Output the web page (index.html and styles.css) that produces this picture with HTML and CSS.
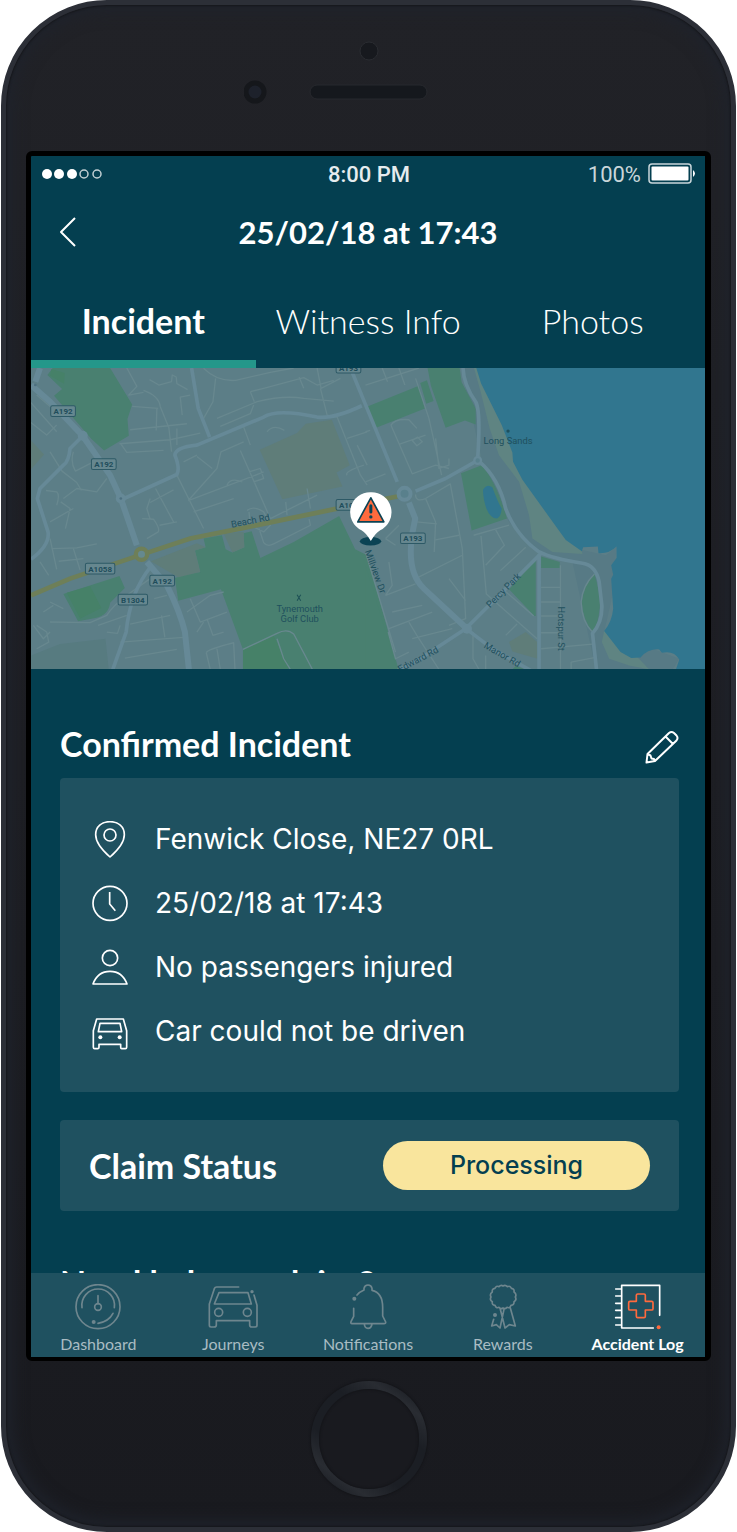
FILE: index.html
```
<!DOCTYPE html>
<html lang="en">
<head>
    <meta charset="UTF-8">
    <meta name="viewport" content="width=device-width, initial-scale=1.0">
    <title>Accident Log</title>
    <link rel="stylesheet" href="styles.css">
</head>
<body>
<div class="phone">
    <div class="phone-top">
        <svg class="sensors" viewBox="0 0 250 70" aria-hidden="true">
            <circle cx="125" cy="12" r="9" fill="#17191e" stroke="#2a2c31"/>
            <circle cx="11" cy="53" r="9" fill="#1d212b" stroke="#15171b" stroke-width="5"/>
            <rect x="66" y="46" width="117" height="14" rx="7" fill="#15181d" stroke="#27292e"/>
        </svg>
    </div>

    <div class="screen">
        <div class="status-bar">
            <svg class="signal" viewBox="0 0 62 12" aria-hidden="true">
                <g fill="#fff">
                    <circle cx="6" cy="6" r="5"/>
                    <circle cx="18" cy="6" r="5"/>
                    <circle cx="31" cy="6" r="5"/>
                </g>
                <g fill="none" stroke="#c3d0d4" stroke-width="1.5">
                    <circle cx="43" cy="6" r="4"/>
                    <circle cx="56" cy="6" r="4"/>
                </g>
            </svg>
            <span class="clock">8:00 PM</span>
            <span class="power">
                100%
                <svg class="battery" viewBox="0 0 49 22" aria-hidden="true">
                    <rect x="1" y="1" width="42" height="19" rx="3" fill="none" stroke="#c9d6da" stroke-width="1.5"/>
                    <rect x="3.5" y="3.5" width="37" height="14" rx="1" fill="#fff"/>
                    <path d="M45 7q4 3.500 0 7z" fill="#fff"/>
                </svg>
            </span>
        </div>

        <header class="title-bar">
            <button class="icon-button back" aria-label="Back">
                <svg viewBox="0 0 18 32"><path d="M16 2 2 16l14 14"/></svg>
            </button>
            <h1>25/02/18 at 17:43</h1>
        </header>

        <nav class="tabs">
            <a class="tab active" href="#incident">Incident</a>
            <a class="tab" href="#witness">Witness Info</a>
            <a class="tab" href="#photos">Photos</a>
        </nav>

        <main class="content" id="incident">
            <svg class="map" viewBox="3 9 2019 903" role="img" aria-label="Map of the incident location">
                <rect x="3" y="9" width="2019" height="903" fill="#5c7e87"/>

                <!-- parks and fields, west -->
                <g fill="#498070">
                    <path d="M105 9H240L306 118 292 162 296 212 222 256 184 222 72 92 96 72 52 30 68 9z"/>
                    <path d="M100 686 268 632 284 668 240 712Q236 748 196 758L144 768z"/>
                    <path d="M520 520 575 510 586 552 606 562 642 546 640 504 664 498 690 578 790 530 926 452 974 552 1010 570 1104 912H638V852L572 672 444 706 434 638 472 626 510 620 494 556 526 546z"/>
                </g>
                <g fill="#468168">
                    <path d="M110 682 180 662 214 728 150 760zM64 12l40 12-2 32-42-24zM638 852 730 812 780 912H638z"/>
                </g>
                <g fill="#5f7d79">
                    <path d="M688 254 800 204 826 176 904 164 958 300 918 322 936 364 756 402z"/>
                    <path d="M362 588 500 534 526 546 494 556 510 620 444 636zM3 226 42 268 3 312zM580 504 640 500 642 546 606 562z"/>
                </g>
                <path d="M3 870 90 836 226 820 236 912H3z" fill="#577b80"/>

                <!-- sea, beach and parks, east -->
                <g transform="translate(1005 0)">
                    <path d="M286 9H340L440 260 560 470 640 552 720 570 752 545 740 690 715 798 800 880 860 850 940 880 920 912H690L620 590 520 560 430 470 350 290z" fill="#577a85"/>
                    <path d="M325 9 345 80 372 190 400 270 460 350 490 450 500 520 560 560 650 566 640 520 440 230 345 9zM715 796 708 830 730 880 790 900 850 912 800 860z" fill="#5f8482"/>
                    <path d="M332 9 346 55 408 180 440 262 442 290 470 344 568 480 600 524 648 558 652 546 696 544 698 564Q730 566 752 544V578L736 600 742 628 736 640 742 730Q738 770 715 797L764 860 796 878 824 876Q846 850 880 852L888 862Q924 854 940 882L930 912H1017V9z" fill="#31768f"/>
                    <g fill="#498070">
                        <path d="M186 9H282L288 52 330 130V178L298 166 240 188 196 62zM6 124 160 62 178 130 32 188zM164 54 184 46 204 108 182 116z"/>
                        <path d="M286 324 348 300Q392 350 424 460L318 496zM430 672 510 584V752H506zM526 574 582 590V608H526z"/>
                        <path d="M686 626Q708 700 700 740 696 780 680 800 650 760 648 710 654 660 686 626zM0 600 94 912H0zM440 912 450 902 480 912z"/>
                    </g>
                    <path d="M430 830 480 800 514 830 516 880 440 858z" fill="#5f7d79"/>
                    <path d="M352 374Q364 354 380 366 396 410 408 430 406 456 394 460 374 460 362 430 352 400 352 374z" fill="#31768f"/>
                </g>

                <!-- side streets -->
                <g class="street">
                    <path d="M290 9 320 64 296 90 340 82M340 76Q386 92 390 124L416 188 424 260M358 44 386 60 424 50 426 30 438 36 440 56 472 74M456 150 450 96 480 90M306 124 384 130M300 194 470 176M268 236 420 224 510 204M272 236 290 262 400 256M380 130 378 196M440 190V240"/>
                    <path d="M520 10Q560 50 616 46L720 22 790 9M556 40 548 110 520 160M660 80 700 70 820 38 860 60 910 46M660 80 672 110M560 160 680 110Q760 90 820 100L910 108M570 184 660 146 670 120M806 36 820 70M870 70 890 150 920 156 990 330 1010 360M860 9 872 70 930 40M640 186 660 240M710 200Q730 176 762 196"/>
                    <path d="M440 330 520 490M474 406 650 340 700 320M490 440 610 400M630 256 720 460M474 406 560 310 572 260 640 230M500 274 546 310M460 290 500 270M590 360Q600 336 636 350M656 320 690 310 700 340 670 350M650 436Q670 420 700 440L720 480 700 500 660 480 656 440M720 460 860 390M766 410l4 40M830 370l10 60M686 490 700 532Q710 546 730 536L840 480 836 462"/>
                    <path d="M60 260 96 318 140 352 154 376M130 260Q120 290 136 318L190 290M80 420Q90 390 80 380L48 376M100 400 140 370 200 380 230 340M60 470 130 430M106 490 120 430 92 410M376 370 430 470M336 460 370 462Q390 490 384 500L350 520M360 400 350 430 360 462M388 480 440 470M360 412 430 374"/>
                    <path d="M60 520 80 612M30 590 56 630M64 550 140 548 200 536M130 550 150 614M86 588 160 580M0 110 80 200M20 90 90 150M0 170 50 210 80 180"/>
                    <path d="M60 770 180 772 230 750Q250 720 290 690L360 640M60 710 100 730M40 740 70 720M10 780 40 820 60 800M20 850 56 830 50 800 20 780M204 780 290 750M230 800 262 804 270 780M300 776 420 750M270 830 460 816M284 878 440 852M372 700 410 690M394 750 404 816"/>
                    <path d="M470 740 540 690 580 680M480 700 510 770 590 740M500 800 520 770M530 760 548 810 580 800M528 862Q530 852 610 832L614 912M528 862 540 912M560 850 570 912M740 820 760 880 780 912"/>
                    <path d="M638 852 740 804Q770 788 790 806L846 912M950 220 1010 200M980 240 1010 300M950 330Q940 320 1000 300"/>
                </g>
                <g class="street" transform="translate(1005 0)">
                    <path d="M0 60 160 9M50 9 66 50M100 9 118 60M150 40 190 160 228 330M0 200 14 196M0 350 60 326M76 180Q90 160 130 164L154 190M76 180 140 326 210 300 250 310M100 238 180 210M140 226 156 216 170 230 154 242zM210 220 220 310 250 300 250 280"/>
                    <path d="M150 388Q150 412 180 400L254 356 290 550 300 760 250 780M180 400 210 470 206 560M210 524 280 510M152 470 214 476M60 520 100 480M60 520 90 540M0 460 40 440M70 590 80 660 60 690M60 690 150 656M80 740 170 720M150 640 290 570M70 790 200 740M250 640 300 706"/>
                    <path d="M324 510 430 480M346 512 362 686 514 820M390 494 416 540 360 600M404 616 480 546M410 670 504 752M420 810 454 776M584 600V912M526 666H584M526 710H584M526 752H584M526 802H584M526 850 680 836M616 890 690 876M616 890V912M130 770 160 820 220 912M140 820 260 790M322 800V880L340 912M68 800 90 880 130 860M360 870V912M0 560 90 860M686 626Q650 660 646 710 648 770 680 800"/>
                </g>

                <!-- main roads -->
                <g class="road">
                    <path d="M484 9 504 130 538 216M282 400 440 328Q450 310 434 270 436 246 500 240L700 156Q740 130 860 156 910 162 994 122M960 9 1100 350M156 214 120 250Q116 290 100 300L30 370 22 400 54 500Q60 540 3 582"/>
                    <path d="M362 604Q300 680 288 800L248 912"/>
                </g>
                <g class="road" transform="translate(1005 0)">
                    <path d="M292 9Q294 60 330 110 346 140 336 280M150 378 240 340 336 286M342 290Q400 340 420 430 450 510 520 560 560 580 650 594 690 600 700 650L708 720Q710 770 680 804L692 912M520 566V912M530 560 300 790 160 882 80 924M304 792 380 850 500 918"/>
                </g>
                <g class="road wide">
                    <path d="M3 60 60 110 156 210 240 330 272 400 320 540M350 590 410 660Q450 740 464 800L476 912M30 9 16 50"/>
                    <path d="M1135 412 1154 460 1146 500Q1126 620 1180 670L1309 790"/>
                </g>

                <!-- Beach Rd -->
                <path d="M3 690 120 640 334 568 480 520 640 488 930 428 1100 394" fill="none" stroke="#6e7f58" stroke-width="14"/>
                <circle cx="334" cy="567" r="17" fill="#65898f" stroke="#6e7f58" stroke-width="13"/>
                <circle cx="1122" cy="386" r="18" fill="#59808c" stroke="#668997" stroke-width="12"/>
                <circle cx="1341" cy="286" r="10" fill="#59808c" stroke="#668997" stroke-width="7"/>
                <circle cx="1309" cy="790" r="15" fill="#668997"/>
                <circle cx="158" cy="212" r="15" fill="#668997"/>
                <circle cx="272" cy="400" r="15" fill="#668997"/>
                <circle cx="272" cy="400" r="4" fill="#4d7080"/>
                <circle cx="16" cy="60" r="4" fill="#4d7080"/>

                <!-- road number badges -->
                <g class="badge">
                    <rect x="62" y="122" width="74" height="32" rx="5"/><text x="99" y="147">A192</text>
                    <rect x="184" y="281" width="74" height="32" rx="5"/><text x="221" y="306">A192</text>
                    <rect x="166" y="594" width="88" height="32" rx="5"/><text x="210" y="619">A1058</text>
                    <rect x="359" y="630" width="74" height="32" rx="5"/><text x="396" y="655">A192</text>
                    <rect x="264" y="687" width="88" height="32" rx="5"/><text x="308" y="712">B1304</text>
                    <rect x="917" y="403" width="88" height="32" rx="5"/><text x="961" y="428">A1058</text>
                    <rect x="917" y="-8" width="74" height="32" rx="5"/><text x="954" y="17">A193</text>
                    <rect x="1110" y="503" width="74" height="32" rx="5"/><text x="1147" y="528">A193</text>
                </g>

                <g class="place">
                    <text transform="translate(662 476) rotate(-11)">Beach Rd</text>
                    <text x="808" y="739">Tynemouth</text>
                    <text x="808" y="771">Golf Club</text>
                    <text x="1432" y="237">Long Sands</text>
                    <text transform="translate(1026 622) rotate(70)">Millview Dr</text>
                    <text transform="translate(1425 682) rotate(-45)">Percy Park</text>
                    <text transform="translate(1583 790) rotate(90)">Hotspur St</text>
                    <text transform="translate(1410 876) rotate(30)">Manor Rd</text>
                    <text transform="translate(1167 890) rotate(-28)">Edward Rd</text>
                    <circle cx="1432" cy="198" r="5"/>
                    <path d="M800 688l11 18M811 688l-11 18" fill="none" stroke="#1c4f55" stroke-width="3"/>
                </g>

                <!-- incident pin -->
                <ellipse cx="1020" cy="528" rx="32" ry="13" fill="#0b4354"/>
                <path d="M1021 381a60 60 0 0 1 28 114q-14 8-28 32-14-24-28-32a60 60 0 0 1 28-114z" fill="#fff"/>
                <path d="M1021 398 1060 470H982z" fill="#ff6a3d" stroke="#0b4354" stroke-width="5" stroke-linejoin="round"/>
                <path d="M1021 422v18" stroke="#0b4354" stroke-width="9" stroke-linecap="round"/>
                <circle cx="1021" cy="455" r="5" fill="#0b4354"/>
            </svg>

            <section class="section">
                <div class="section-head">
                    <h2>Confirmed Incident</h2>
                    <button class="icon-button" aria-label="Edit incident">
                        <svg class="pencil" viewBox="0 0 34 34"><path d="M1.500 32.500 2.500 24 24 3Q26.500 1 29 3L31.500 5.500Q33.500 8 31.500 10.500L10 31zM20.500 6.500l7.500 7.500M2.500 24l3 1.500 1 3 2.500.5 1 2"/></svg>
                    </button>
                </div>
                <ul class="card details">
                    <li>
                        <svg viewBox="35 29 108 111" aria-hidden="true"><path d="M89 137Q46 99 46 70C46 46 64 31 89 31s43 15 43 39q0 29-43 67z"/><circle cx="89" cy="71" r="18"/></svg>
                        Fenwick Close, NE27 0RL
                    </li>
                    <li>
                        <svg viewBox="35 224 108 111" aria-hidden="true"><circle cx="89" cy="279" r="51"/><path d="M88 245v36l17 20"/></svg>
                        25/02/18 at 17:43
                    </li>
                    <li>
                        <svg viewBox="35 414 108 111" aria-hidden="true"><circle cx="89" cy="441" r="23"/><path d="M38 519Q52 481 89 481t51 38z"/></svg>
                        No passengers injured
                    </li>
                    <li>
                        <svg viewBox="35 610 108 111" aria-hidden="true"><path d="M49 628H129L139 663V713Q139 717 135 717H124Q121 717 121 713V704H56V713Q56 717 52 717H43Q39 717 39 713V663z"/><path d="M59 641H119L124 666H54z"/><circle class="dot" cx="60" cy="683" r="6"/><circle class="dot" cx="118" cy="683" r="6"/></svg>
                        Car could not be driven
                    </li>
                </ul>
                <div class="card claim">
                    <h2>Claim Status</h2>
                    <span class="pill">Processing</span>
                </div>
            </section>

            <section class="section">
                <div class="section-head">
                    <h2>Need help or advice?</h2>
                </div>
            </section>
        </main>

        <nav class="bottom-nav">
            <a href="#dashboard">
                <svg viewBox="122 86 162 138" aria-hidden="true"><circle cx="203" cy="154" r="66"/><path d="M155 157A49 49 0 1 1 252 157M203 121v24M248 174Q236 198 203 204"/><circle cx="203" cy="155" r="10"/><circle class="dot" cx="190" cy="200" r="6"/></svg>
                Dashboard
            </a>
            <a href="#journeys">
                <svg viewBox="528 86 162 138" aria-hidden="true"><path d="M626 95H560Q555 95 553 100L538 146V210Q538 215 543 215H553Q559 215 559 209V196H659V209Q659 215 665 215H676Q681 215 681 210V150L672 119"/><path d="M567 112H654L664 146H553z"/><circle cx="566" cy="171" r="12"/><circle cx="652" cy="171" r="12"/><circle class="dot" cx="666" cy="109" r="5"/></svg>
                Journeys
            </a>
            <a href="#notifications">
                <svg viewBox="933 86 162 138" aria-hidden="true"><path d="M981 119Q988 110 1002 104V99Q1004 89 1014 89T1026 99V105Q1058 112 1058 156V182L1067 200Q1068 205 1062 205H966Q961 205 963 199L971 183V159M1003 206Q1004 219 1014 219T1026 206"/><circle class="dot" cx="973" cy="130" r="6"/></svg>
                Notifications
            </a>
            <a href="#rewards">
                <svg viewBox="333 86 162 138" aria-hidden="true"><path d="M414 92Q421 87 427 94 436 90 439 99 449 101 447 110 456 116 451 125 456 134 447 139 448 149 438 150 435 160 426 156 420 163 414 158 408 163 402 156 393 160 390 150 380 149 382 139 373 134 378 125 373 116 382 110 380 101 390 99 393 90 402 94 408 87 414 92zM386 192 380 212 394 208 405 218 417 162M405 158 420 218 433 208 451 212 436 158"/><circle class="dot" cx="390" cy="179" r="6"/></svg>
                Rewards
            </a>
            <a class="active" href="#accident-log">
                <svg viewBox="739 86 162 138" aria-hidden="true"><path d="M885 180V90H771V218H866M753 101h18M753 122h18M753 144h18M753 165h18M753 187h18M753 209h18"/><path class="cross" d="M819 116H838Q842 116 842 120V138H861Q865 138 865 142V160Q865 164 861 164H842V183Q842 187 838 187H819Q815 187 815 183V164H796Q792 164 792 160V142Q792 138 796 138H815V120Q815 116 819 116z"/><circle class="dot" cx="882" cy="216" r="6"/></svg>
                Accident Log
            </a>
        </nav>
    </div>

    <div class="phone-bottom">
        <button class="home" aria-label="Home"></button>
    </div>
</div>
</body>
</html>
```
FILE: styles.css
```
* {
    box-sizing: border-box;
}

body {
    margin: 0;
    background-color: #fff;
    color: #fff;
    font-family: Lato, sans-serif;
}

h1, h2, ul {
    margin: 0;
    padding: 0;
}

a {
    color: inherit;
    text-decoration: none;
}

svg {
    display: block;
    flex: none;
}

/* phone body */
.phone {
    display: flex;
    flex-direction: column;
    height: 100vh;
    margin: 0 1px;
    padding: 0 20px;
    border: 5px solid #2c2f37;
    border-radius: 106px;
    background: linear-gradient(#212227, #191a1f);
    box-shadow: inset 0 0 2px 1px #15161a, inset 0 0 16px 6px #1f232c;
}

.phone-top {
    display: flex;
    justify-content: center;
    height: 146px;
    padding-top: 34px;
}

.sensors {
    width: 250px;
    height: 70px;
}

.phone-bottom {
    display: flex;
    justify-content: center;
    height: 166px;
    padding-top: 20px;
}

.home {
    width: 116px;
    height: 116px;
    border: 8px solid transparent;
    border-radius: 50%;
    background: linear-gradient(#191a1f, #191a1f) padding-box, linear-gradient(35deg, #1c1f25 10%, #292c32 20%, #1b1e24 36%, #1b1e24 64%, #292c32 80%, #1c1f25 90%) border-box;
    box-shadow: 0 0 2px 1px #141519, inset 0 0 2px 1px #141519;
}

.screen {
    display: flex;
    flex: 1;
    flex-direction: column;
    min-height: 0;
    border: 5px solid #000;
    border-width: 5px 6px 4px 5px;
    border-radius: 6px;
    background-color: #043f50;
}

/* header */
.status-bar {
    display: grid;
    grid-template-columns: 1fr auto 1fr;
    align-items: center;
    height: 36px;
    padding: 0 8px 0 10px;
    font-family: Roboto, sans-serif;
    font-size: 22px;
    color: #c9d6da;
}

.signal {
    width: 62px;
    height: 12px;
}

.clock {
    font-weight: 500;
    color: #e6ecee;
}

.power {
    display: flex;
    gap: 7px;
    align-items: center;
    justify-self: end;
}

.battery {
    width: 49px;
    height: 22px;
}

.title-bar {
    display: grid;
    grid-template-columns: 1fr auto 1fr;
    align-items: center;
    height: 80px;
    padding: 0 28px;
}

h1 {
    font-size: 31px;
    line-height: 40px;
}

h2 {
    font-size: 34px;
    line-height: 36px;
}

.icon-button {
    padding: 0;
    border: 0;
    background: none;
    color: #fff;
    cursor: pointer;
}

.icon-button svg {
    fill: none;
    stroke: currentColor;
    stroke-width: 2;
    stroke-linejoin: round;
}

.back {
    justify-self: start;
}

.back svg {
    width: 18px;
    height: 32px;
}

.pencil {
    width: 34px;
    height: 34px;
}

.tabs {
    display: grid;
    grid-template-columns: repeat(3, 1fr);
}

.tab {
    height: 96px;
    padding-top: 25px;
    border-bottom: 8px solid transparent;
    font-size: 34px;
    font-weight: 300;
    line-height: 48px;
    text-align: center;
}

.tab.active {
    border-color: #24978a;
    font-weight: 700;
}

.content {
    flex: 1;
    min-height: 0;
    overflow: hidden;
}

/* map */
.map {
    width: 100%;
}

.street {
    fill: none;
    stroke: #68888f;
    stroke-width: 4;
    stroke-linejoin: round;
}

.road {
    fill: none;
    stroke: #668997;
    stroke-width: 11;
    stroke-linejoin: round;
}

.road.wide {
    stroke-width: 18;
}

.badge rect {
    fill: #66878f;
    stroke: #2d5966;
    stroke-width: 3;
}

.badge text {
    fill: #1f4d5b;
    font-family: Roboto, sans-serif;
    font-size: 24px;
    font-weight: 700;
    text-anchor: middle;
}

.place {
    fill: #1f505d;
    font-family: Roboto, sans-serif;
    font-size: 28px;
    text-anchor: middle;
}

/* incident details */
.section {
    padding: 57px 26px 0 29px;
}

.section + .section {
    padding-top: 54px;
}

.section-head {
    display: flex;
    align-items: flex-start;
    justify-content: space-between;
    height: 42px;
    margin-bottom: 10px;
}

.section-head .icon-button {
    align-self: center;
}

.card {
    border-radius: 4px;
    background-color: #1f5160;
}

.details {
    padding: 29px 32px;
    font-family: Inter, sans-serif;
    font-size: 28px;
    list-style: none;
}

.details li {
    display: flex;
    gap: 27px;
    align-items: center;
    min-height: 64px;
}

.details svg {
    width: 36px;
    height: 37px;
    fill: none;
    stroke: #fff;
    stroke-width: 5;
    stroke-linejoin: round;
}

.details .dot {
    fill: #fff;
    stroke: none;
}

.claim {
    display: flex;
    align-items: center;
    justify-content: space-between;
    height: 91px;
    margin-top: 28px;
    padding: 0 29px;
}

.pill {
    width: 267px;
    border-radius: 25px;
    background-color: #f9e59d;
    color: #043f50;
    font-family: Inter, sans-serif;
    font-size: 25px;
    font-weight: 500;
    line-height: 49px;
    text-align: center;
}

/* bottom navigation */
.bottom-nav {
    display: grid;
    grid-template-columns: repeat(5, 1fr);
    height: 84px;
    padding-top: 11px;
    background-color: #1f5160;
}

.bottom-nav a {
    display: flex;
    flex-direction: column;
    gap: 3px;
    align-items: center;
    color: #a9bcc3;
    font-size: 16px;
    line-height: 22px;
}

.bottom-nav svg {
    width: 54px;
    height: 46px;
    fill: none;
    stroke: #6e868e;
    stroke-width: 5;
    stroke-linecap: round;
    stroke-linejoin: round;
}

.bottom-nav .dot {
    fill: #6e868e;
    stroke: none;
}

.bottom-nav .active {
    color: #fff;
    font-weight: 700;
}

.bottom-nav .active svg {
    stroke: #fff;
}

.bottom-nav .active .cross {
    stroke: #ff6a3d;
}

.bottom-nav .active .dot {
    fill: #ff6a3d;
    stroke: none;
}
```
